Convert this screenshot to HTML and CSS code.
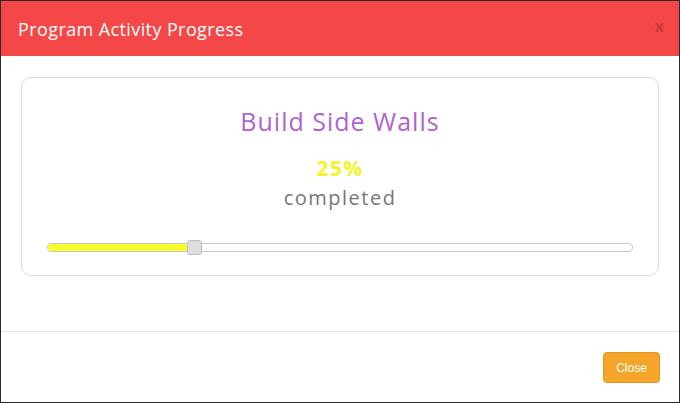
FILE: index.html
```html
<!DOCTYPE html>
<html>
<head>
<meta charset="utf-8">
<link rel="stylesheet" href="styles.css">
</head>
<body>
<div class="modal">
  <div class="modal-header">
    <h4 class="modal-title">Program Activity Progress</h4>
    <span class="close-x">x</span>
  </div>
  <div class="modal-body">
    <div class="card">
      <div class="activity">Build Side Walls</div>
      <div class="percent">25%</div>
      <div class="status">completed</div>
      <div class="slider">
        <div class="track">
          <div class="fill" style="width:25%"></div>
          <div class="thumb" style="left:25%"></div>
        </div>
      </div>
    </div>
  </div>
  <div class="modal-footer">
    <button class="btn-close">Close</button>
  </div>
</div>
</body>
</html>
```
FILE: styles.css
```css
html, body {
  margin: 0;
  padding: 0;
  height: 100%;
}
body {
  background: #2b2b2b;
  padding: 1px;
  box-sizing: border-box;
  font-family: "Open Sans", sans-serif;
}
.modal {
  background: #fff;
  height: 401px;
  display: flex;
  flex-direction: column;
}
.modal-header {
  background: #f44848;
  height: 55px;
  display: flex;
  align-items: center;
  justify-content: space-between;
  padding: 0 15px 0 17px;
}
.modal-title {
  margin: 0;
  color: #fff;
  font-weight: 500;
  font-size: 18px;
  letter-spacing: 0.4px;
}
.close-x {
  color: #c23a3a;
  font-weight: 700;
  font-size: 17px;
  font-family: "Liberation Sans", sans-serif;
  margin-top: -4px;
}
.modal-body {
  height: 276px;
  padding: 21px 20px 0 20px;
  box-sizing: border-box;
  border-bottom: 1px solid #e5e5e5;
}
.card {
  border: 1px solid #dcdcdc;
  border-radius: 10px;
  height: 199px;
  box-sizing: border-box;
  display: flex;
  flex-direction: column;
  align-items: center;
  padding-top: 27px;
}
.activity {
  color: #b063cf;
  font-size: 25px;
  font-weight: 500;
  line-height: 32px;
  letter-spacing: 1px;
}
.percent {
  color: #f4f42a;
  font-size: 21px;
  font-weight: 700;
  line-height: 28px;
  margin-top: 17px;
  letter-spacing: 1.3px;
}
.status {
  color: #777;
  font-size: 20px;
  font-weight: 500;
  line-height: 26px;
  margin-top: 3px;
  letter-spacing: 1.5px;
}
.slider {
  align-self: stretch;
  padding: 0 25px 0 25px;
  margin-top: 32px;
}
.track {
  position: relative;
  height: 9px;
  border: 1px solid #c8c8c8;
  border-radius: 4px;
  box-sizing: border-box;
  background: #fff;
}
.fill {
  height: 100%;
  background: #f8ff2e;
  border-radius: 3px 0 0 3px;
}
.thumb {
  position: absolute;
  top: -4px;
  width: 13px;
  height: 13px;
  margin-left: -7px;
  background: #dedede;
  border: 1px solid #bdbdbd;
  border-radius: 3px;
}
.modal-footer {
  flex: 1;
  display: flex;
  justify-content: flex-end;
  align-items: flex-start;
  padding: 20px 19px 0 0;
}
.btn-close {
  width: 57px;
  height: 31px;
  background: #f5a52a;
  border: 1px solid #e09420;
  border-radius: 4px;
  color: #fff;
  font-family: "Liberation Sans", sans-serif;
  font-size: 12px;
  padding: 0;
}
```
